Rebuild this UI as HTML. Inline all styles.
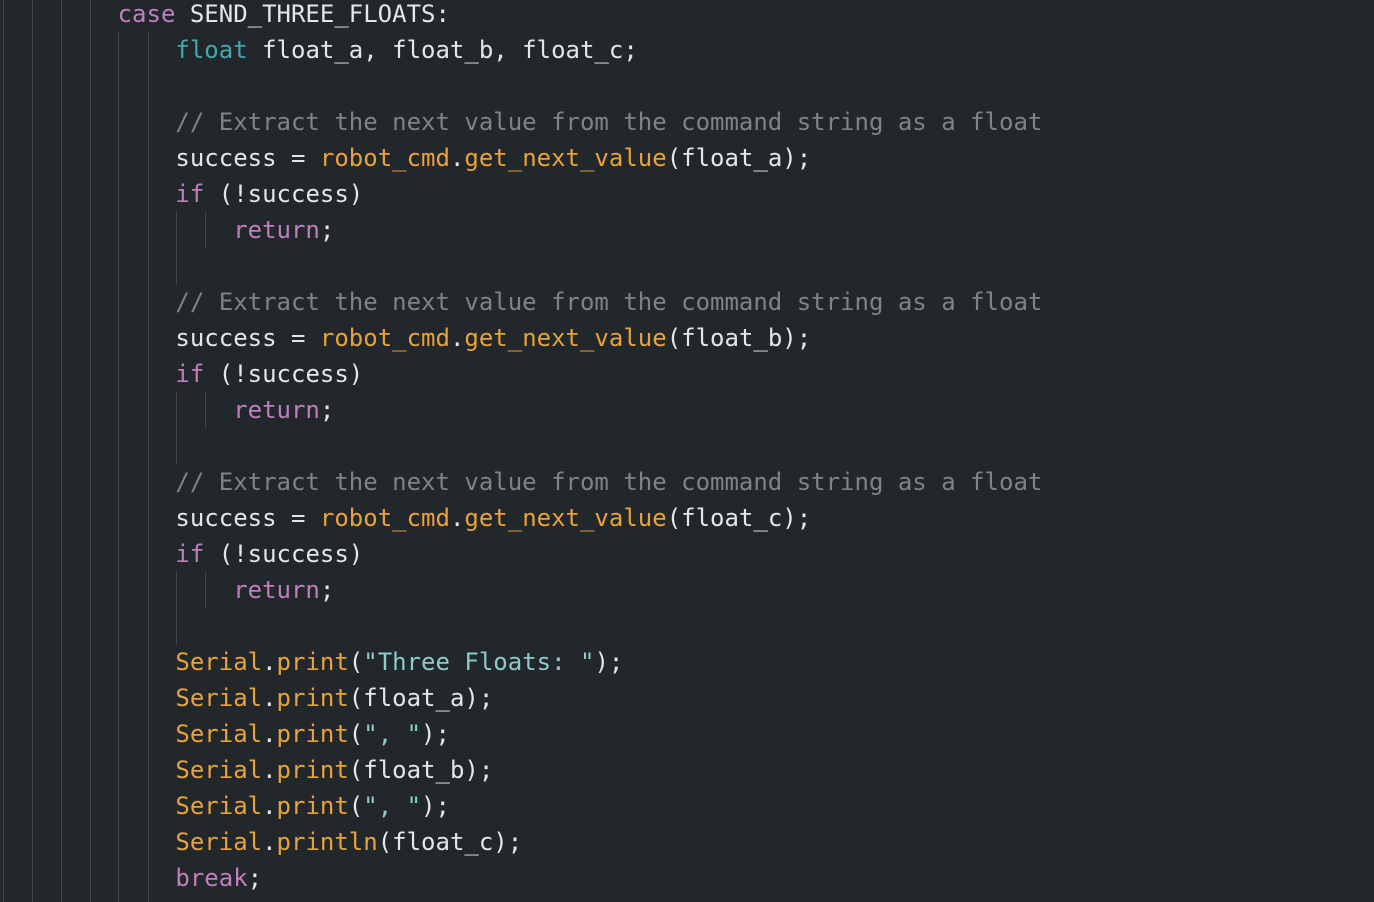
<!DOCTYPE html>
<html><head><meta charset="utf-8"><style>
html,body{margin:0;padding:0;background:#22272c;width:1374px;height:902px;overflow:hidden}
.g{position:absolute;width:1px;background:#41464b}
pre{position:absolute;left:2px;top:-4px;margin:0;font-family:"DejaVu Sans Mono","Liberation Mono",monospace;font-size:24px;line-height:36px;color:#e4e6e8}
.k{color:#c07fbc}.t{color:#45a8aa}.c{color:#7d8488}.o{color:#e9a23b}.s{color:#8fcbcb}
</style></head><body>
<div class="g" style="left:3px;top:0;height:902px"></div>
<div class="g" style="left:32px;top:0;height:902px"></div>
<div class="g" style="left:61px;top:0;height:902px"></div>
<div class="g" style="left:90px;top:0;height:902px"></div>
<div class="g" style="left:118px;top:32px;height:870px"></div>
<div class="g" style="left:148px;top:32px;height:870px"></div>
<div class="g" style="left:176px;top:212px;height:72px"></div>
<div class="g" style="left:205px;top:212px;height:36px"></div>
<div class="g" style="left:176px;top:392px;height:72px"></div>
<div class="g" style="left:205px;top:392px;height:36px"></div>
<div class="g" style="left:176px;top:572px;height:72px"></div>
<div class="g" style="left:205px;top:572px;height:36px"></div>
<pre>        <span class="k">case</span> SEND_THREE_FLOATS:
            <span class="t">float</span> float_a, float_b, float_c;

            <span class="c">// Extract the next value from the command string as a float</span>
            success = <span class="o">robot_cmd</span>.<span class="o">get_next_value</span>(float_a);
            <span class="k">if</span> (!success)
                <span class="k">return</span>;

            <span class="c">// Extract the next value from the command string as a float</span>
            success = <span class="o">robot_cmd</span>.<span class="o">get_next_value</span>(float_b);
            <span class="k">if</span> (!success)
                <span class="k">return</span>;

            <span class="c">// Extract the next value from the command string as a float</span>
            success = <span class="o">robot_cmd</span>.<span class="o">get_next_value</span>(float_c);
            <span class="k">if</span> (!success)
                <span class="k">return</span>;

            <span class="o">Serial</span>.<span class="o">print</span>(<span class="s">"Three Floats: "</span>);
            <span class="o">Serial</span>.<span class="o">print</span>(float_a);
            <span class="o">Serial</span>.<span class="o">print</span>(<span class="s">", "</span>);
            <span class="o">Serial</span>.<span class="o">print</span>(float_b);
            <span class="o">Serial</span>.<span class="o">print</span>(<span class="s">", "</span>);
            <span class="o">Serial</span>.<span class="o">println</span>(float_c);
            <span class="k">break</span>;
</pre>
</body></html>
